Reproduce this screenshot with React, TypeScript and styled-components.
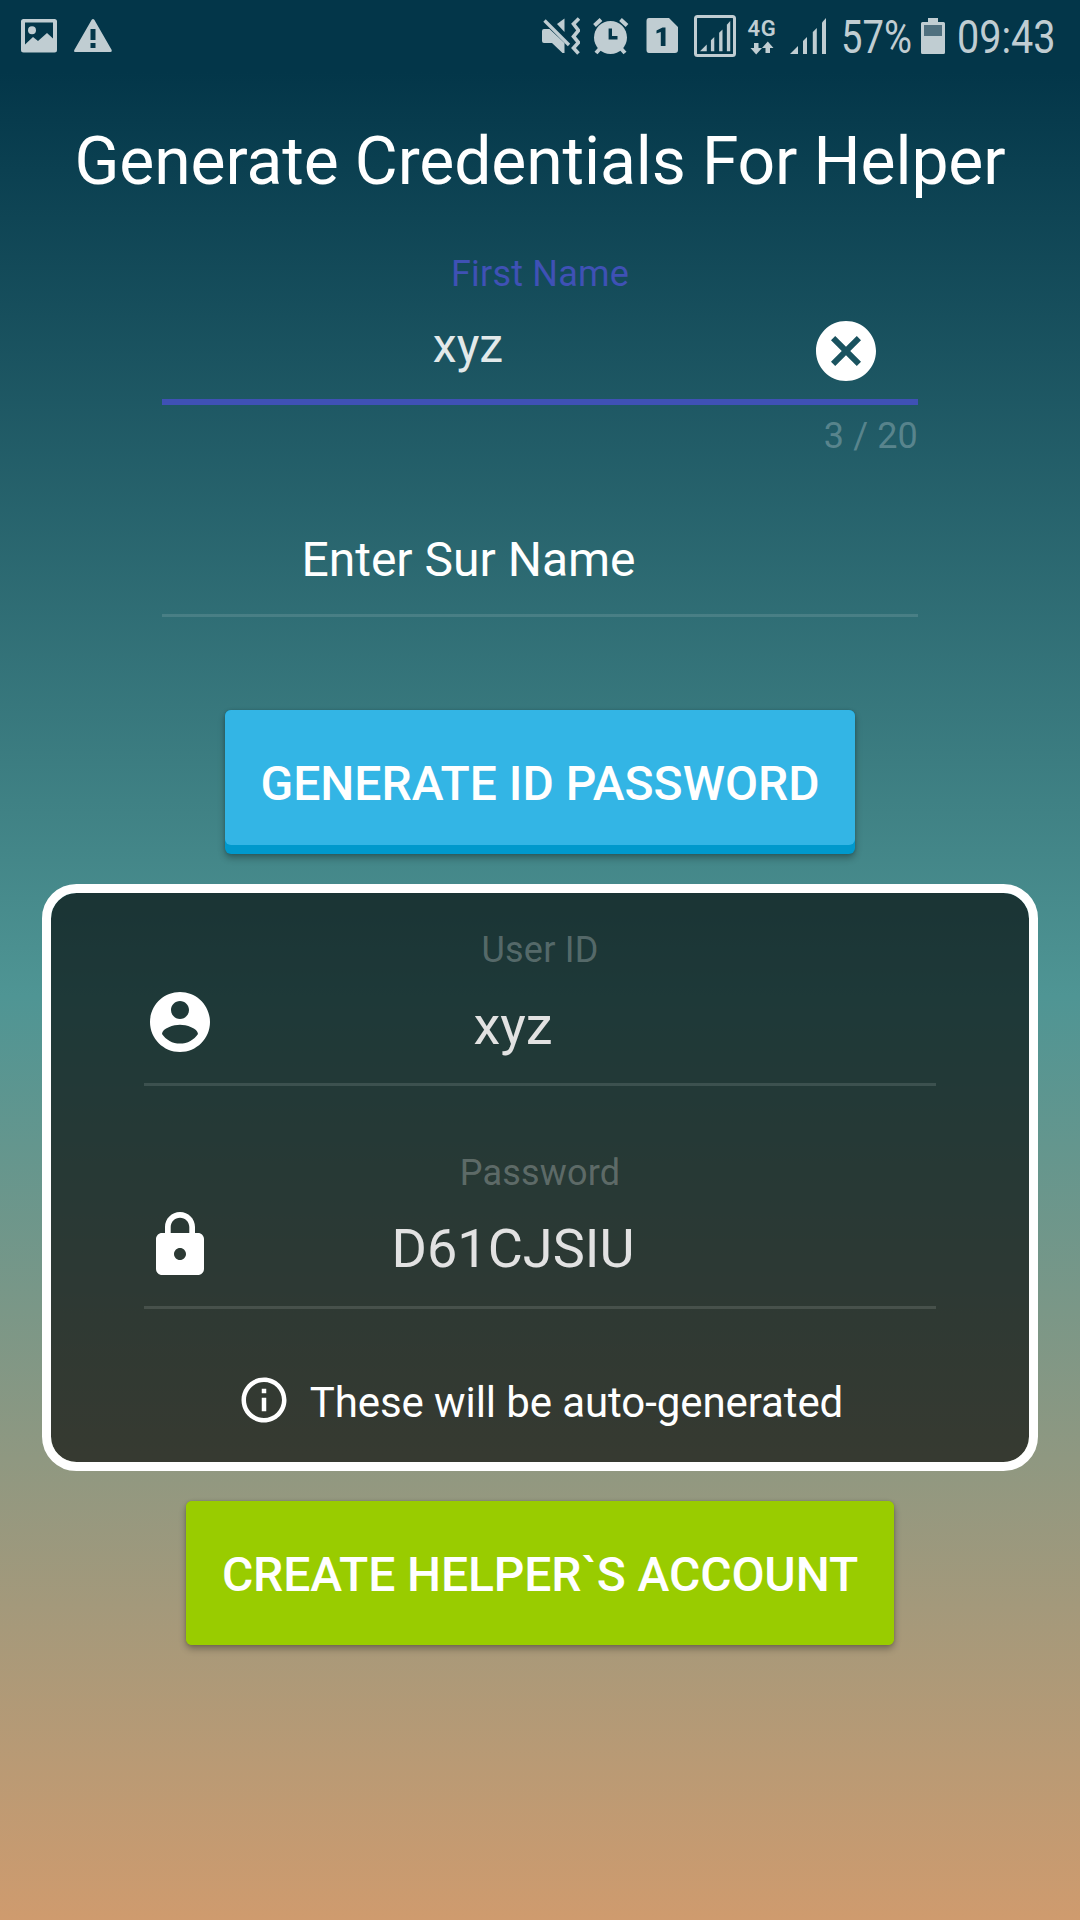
import React from "react";
import styled, { createGlobalStyle } from "styled-components";

const GlobalStyle = createGlobalStyle`
  * { box-sizing: border-box; }
  html, body { margin: 0; padding: 0; }
  body { font-family: Roboto, "Noto Sans", sans-serif; }
`;

const Screen = styled.main`
  width: 1080px;
  height: 1920px;
  overflow: hidden;
  display: flex;
  flex-direction: column;
  align-items: center;
  background: linear-gradient(180deg, #033649 0, #033649 72px, #4f9594 996px, #cf9b6e 1920px);
  color: #fff;
`;

const StatusBar = styled.header`
  width: 100%;
  height: 72px;
  flex: none;
  display: flex;
  justify-content: space-between;
  padding: 0 25px 0 20px;
  color: #c0cdd2;
`;

const StatusGroup = styled.div<{ $gap?: number }>`
  display: flex;
  align-items: center;
  gap: ${(p) => p.$gap ?? 0}px;
`;

const StatusIcon = styled.svg<{ $w: number; $after?: number }>`
  width: ${(p) => p.$w}px;
  height: 72px;
  flex: none;
  display: block;
  margin-right: ${(p) => p.$after ?? 0}px;
  fill: currentColor;
`;

const StatusText = styled.span<{ $w: number; $squeeze: number }>`
  width: ${(p) => p.$w}px;
  font-size: 46px;
  line-height: 75px;
  height: 72px;
  white-space: nowrap;
  transform: scaleX(${(p) => p.$squeeze});
  transform-origin: 0 50%;
`;

const Network = styled.div`
  width: 30px;
  height: 72px;
  margin: 0 13px 0 11px;
  display: flex;
  flex-direction: column;
  align-items: center;
  padding-top: 17px;
`;

const NetworkLabel = styled.span`
  font-size: 22px;
  font-weight: 600;
  line-height: 23px;
  height: 22px;
  letter-spacing: 0.8px;
`;

const Title = styled.h1`
  margin: 50px 0 0;
  height: 80px;
  line-height: 80px;
  font-size: 66px;
  font-weight: 400;
  letter-spacing: -0.11px;
  white-space: nowrap;
`;

const Field = styled.section<{ $width: number; $top: number }>`
  width: ${(p) => p.$width}px;
  margin-top: ${(p) => p.$top}px;
  display: flex;
  flex-direction: column;
`;

const Label = styled.label<{ $active?: boolean }>`
  height: 44px;
  line-height: 44px;
  font-size: 36px;
  letter-spacing: 0.2px;
  text-align: center;
  color: ${(p) => (p.$active ? "#3f51b5" : "rgba(255,255,255,0.26)")};
`;

const InputRow = styled.div<{ $lead: number; $trail: number; $height: number }>`
  display: grid;
  grid-template-columns: ${(p) => p.$lead}px 1fr ${(p) => p.$trail}px;
  height: ${(p) => p.$height}px;
`;

const Value = styled.span<{ $size: number; $color: string; $line: number }>`
  grid-column: 2;
  font-size: ${(p) => p.$size}px;
  line-height: ${(p) => p.$line}px;
  height: ${(p) => p.$line}px;
  text-align: center;
  color: ${(p) => p.$color};
`;

const Glyph = styled.svg<{ $size: number; $top?: number }>`
  width: ${(p) => p.$size}px;
  height: ${(p) => p.$size}px;
  margin-top: ${(p) => p.$top ?? 0}px;
  flex: none;
  justify-self: center;
  display: block;
  fill: #fff;
`;

const Underline = styled.div<{ $active?: boolean }>`
  height: ${(p) => (p.$active ? 6 : 3)}px;
  background: ${(p) => (p.$active ? "#3f51b5" : "rgba(255,255,255,0.12)")};
`;

const Counter = styled.span`
  height: 44px;
  margin-top: 9px;
  line-height: 44px;
  font-size: 36px;
  letter-spacing: 0.15px;
  text-align: right;
  color: rgba(255, 255, 255, 0.26);
`;

const Button = styled.button<{ $width: number; $top: number; $edge: string; $spacing?: number }>`
  width: ${(p) => p.$width}px;
  height: 144px;
  flex: none;
  display: flex;
  flex-direction: column;
  align-items: stretch;
  justify-content: flex-start;
  margin-top: ${(p) => p.$top}px;
  padding: 0;
  border: 0;
  border-radius: 6px;
  background: ${(p) => p.$edge};
  color: #fff;
  font: 500 48px/147px Roboto, "Noto Sans", sans-serif;
  letter-spacing: ${(p) => p.$spacing ?? 0}px;
  text-transform: uppercase;
  white-space: nowrap;
  box-shadow: 0 4px 7px rgba(0, 0, 0, 0.3), 0 0 3px rgba(0, 0, 0, 0.16);
`;

const Face = styled.span<{ $height: number; $fill: string }>`
  display: block;
  height: ${(p) => p.$height}px;
  border-radius: 6px;
  background: ${(p) => p.$fill};
`;

const Card = styled.section`
  width: 996px;
  height: 587px;
  flex: none;
  margin-top: 30px;
  border: 9px solid #fff;
  border-radius: 34.5px;
  background: rgba(0, 0, 0, 0.62);
  background-clip: padding-box;
  display: flex;
  flex-direction: column;
  align-items: center;
`;

const Notice = styled.p`
  margin: 64px 0 0;
  height: 54px;
  display: flex;
  align-items: center;
  gap: 19px;
  font-size: 42px;
  line-height: 59px;
  letter-spacing: -0.09px;
  white-space: nowrap;
`;

const NoticeText = styled.span`
  height: 54px;
`;

const SignalBars = () => (
  <>
    <path d="M0 36 8 28V36Z" />
    <path d="M13 23 17 19V36H13Z" />
    <path d="M22.8 14 26.8 10V36H22.8Z" />
    <path d="M32 4.5 36 0V36H32Z" />
  </>
);

const CredentialField = ({
  label, value, top, icon,
}: { label: string; value: string; top: number; icon: React.ReactNode }) => (
  <Field $width={792} $top={top}>
    <Label>{label}</Label>
    <InputRow $lead={72} $trail={126} $height={111}>
      <Glyph viewBox="0 0 24 24" $size={72} $top={14}>{icon}</Glyph>
      <Value $size={54} $color="#e2e2e2" $line={108}>{value}</Value>
    </InputRow>
    <Underline />
  </Field>
);

export default function App() {
  return (
    <Screen>
      <GlobalStyle />
      <StatusBar>
        <StatusGroup $gap={15}>
          <StatusIcon $w={38} viewBox="20 0 38 72">
            <path fillRule="evenodd" d="M23.5 19H54.5Q57 19 57 21.5V50Q57 52.5 54.5 52.5H23.5Q21 52.5 21 50V21.5Q21 19 23.5 19ZM25 22.5V44.5L33 37 38 41 47 33 53 38.5V22.5Z" />
            <circle cx="32" cy="30.2" r="4" />
          </StatusIcon>
          <StatusIcon $w={40} viewBox="73 0 40 72">
            <path fillRule="evenodd" d="M91.7 19.8Q93 18 94.3 19.8L111.7 50Q112.3 52 110.5 52H75.5Q73.5 52 74.3 50ZM90.5 29V40H95.5V29ZM90.5 43V48H95.5V43Z" />
          </StatusIcon>
        </StatusGroup>
        <StatusGroup>
          <StatusIcon $w={38} $after={12.5} viewBox="542 0 38 72">
            <path d="M557 24 564.5 18.5V32Z" />
            <path d="M542 31Q542 29 544 29H549.5L564.5 43V53H562.5L552 43H544Q542 43 542 41Z" />
            <path d="M544.5 20.5 569 45" fill="none" stroke="currentColor" strokeWidth="3.4" />
            <path d="M579 18.5 573.5 24 578.5 30.5 573.5 36.5 578.5 42.5 573.5 48 578.5 53.5" fill="none" stroke="currentColor" strokeWidth="3.6" />
          </StatusIcon>
          <StatusIcon $w={36} $after={17.5} viewBox="592.5 0 36 72">
            <circle cx="610" cy="37.5" r="16.5" />
            <path d="M594 25.5 600.5 19.5M626.5 25.5 620 19.5M600 48 595.5 53M620 48 624.5 53" fill="none" stroke="currentColor" strokeWidth="4" />
            <path d="M609.8 28.5V37.8H617" fill="none" stroke="#033649" strokeWidth="3.4" />
          </StatusIcon>
          <StatusIcon $w={33} $after={15} viewBox="646 0 33 72">
            <path fillRule="evenodd" d="M649 18H669L678 27V50Q678 53 675 53H649Q646.5 53 646.5 50V21Q646.5 18 649 18ZM662.5 27.5 656.5 30.5V33.5L660.8 32V46H665.5V27.5Z" />
          </StatusIcon>
          <StatusIcon $w={42} viewBox="694 0 42 72">
            <rect x="695.5" y="16.5" width="39" height="39" rx="2" fill="none" stroke="currentColor" strokeWidth="3" />
            <g transform="translate(700 21) scale(.84)"><SignalBars /></g>
          </StatusIcon>
          <Network>
            <NetworkLabel>4G</NetworkLabel>
            <svg width="24" height="16" viewBox="0 0 24 16" fill="currentColor">
              <path d="M4 4H8.5V9H12L6.2 15.5.5 9H4ZM15.5 14H20V9H23.5L17.8 2.5 12 9H15.5Z" />
            </svg>
          </Network>
          <StatusIcon $w={36} $after={15} viewBox="0 -18 36 72">
            <SignalBars />
          </StatusIcon>
          <StatusText $w={80} $squeeze={0.83}>57%</StatusText>
          <StatusIcon $w={24} $after={12} viewBox="921 0 24 72">
            <path d="M928 18H938V22H943.5Q945 22 945 23.5V52.5Q945 54 943.5 54H922.5Q921 54 921 52.5V23.5Q921 22 922.5 22H928Z" />
            <path d="M924 25H942V36H924Z" fill="#50707f" />
          </StatusIcon>
          <StatusText $w={98} $squeeze={0.86}>09:43</StatusText>
        </StatusGroup>
      </StatusBar>

      <Title>Generate Credentials For Helper</Title>

      <Field $width={756} $top={50}>
        <Label $active>First Name</Label>
        <InputRow $lead={0} $trail={144} $height={103}>
          <Value $size={48} $color="#e2e9ea" $line={99}>xyz</Value>
          <Glyph viewBox="0 0 24 24" $size={72} $top={19}>
            <path d="M12 2C6.47 2 2 6.47 2 12s4.47 10 10 10 10-4.47 10-10S17.53 2 12 2zm5 13.59L15.59 17 12 13.41 8.41 17 7 15.59 10.59 12 7 8.41 8.41 7 12 10.59 15.59 7 17 8.41 13.41 12 17 15.59z" />
          </Glyph>
        </InputRow>
        <Underline $active />
        <Counter>3 / 20</Counter>
      </Field>

      <Field $width={756} $top={56}>
        <InputRow $lead={0} $trail={143} $height={100}>
          <Value $size={48} $color="#fff" $line={91}>Enter Sur Name</Value>
        </InputRow>
        <Underline />
      </Field>

      <Button $width={630} $top={93} $edge="#0099cc">
        <Face $height={135} $fill="#33b5e5">Generate ID Password</Face>
      </Button>

      <Card>
        <CredentialField
          label="User ID"
          value="xyz"
          top={35}
          icon={<path d="M12 2C6.48 2 2 6.48 2 12s4.48 10 10 10 10-4.48 10-10S17.52 2 12 2zm0 3c1.66 0 3 1.34 3 3s-1.34 3-3 3-3-1.34-3-3 1.34-3 3-3zm0 14.2c-2.5 0-4.71-1.28-6-3.22.03-1.99 4-3.08 6-3.08 1.99 0 5.97 1.09 6 3.08-1.29 1.94-3.5 3.22-6 3.22z" />}
        />
        <CredentialField
          label="Password"
          value="D61CJSIU"
          top={65}
          icon={<path d="M18 8h-1V6c0-2.76-2.24-5-5-5S7 3.24 7 6v2H6c-1.1 0-2 .9-2 2v10c0 1.1.9 2 2 2h12c1.1 0 2-.9 2-2V10c0-1.1-.9-2-2-2zm-6 9c-1.1 0-2-.9-2-2s.9-2 2-2 2 .9 2 2-.9 2-2 2zm3.1-9H8.9V6c0-1.71 1.39-3.1 3.1-3.1 1.71 0 3.1 1.39 3.1 3.1v2z" />}
        />
        <Notice>
          <Glyph viewBox="0 0 24 24" $size={54}>
            <path d="M11 17h2v-6h-2v6zm1-15C6.48 2 2 6.48 2 12s4.48 10 10 10 10-4.48 10-10S17.52 2 12 2zm0 18c-4.41 0-8-3.59-8-8s3.59-8 8-8 8 3.59 8 8-3.59 8-8 8zM11 9h2V7h-2v2z" />
          </Glyph>
          <NoticeText>These will be auto-generated</NoticeText>
        </Notice>
      </Card>

      <Button $width={708} $top={30} $edge="#99cc00" $spacing={-0.1}>
        <Face $height={144} $fill="#99cc00">Create Helper`s Account</Face>
      </Button>
    </Screen>
  );
}
